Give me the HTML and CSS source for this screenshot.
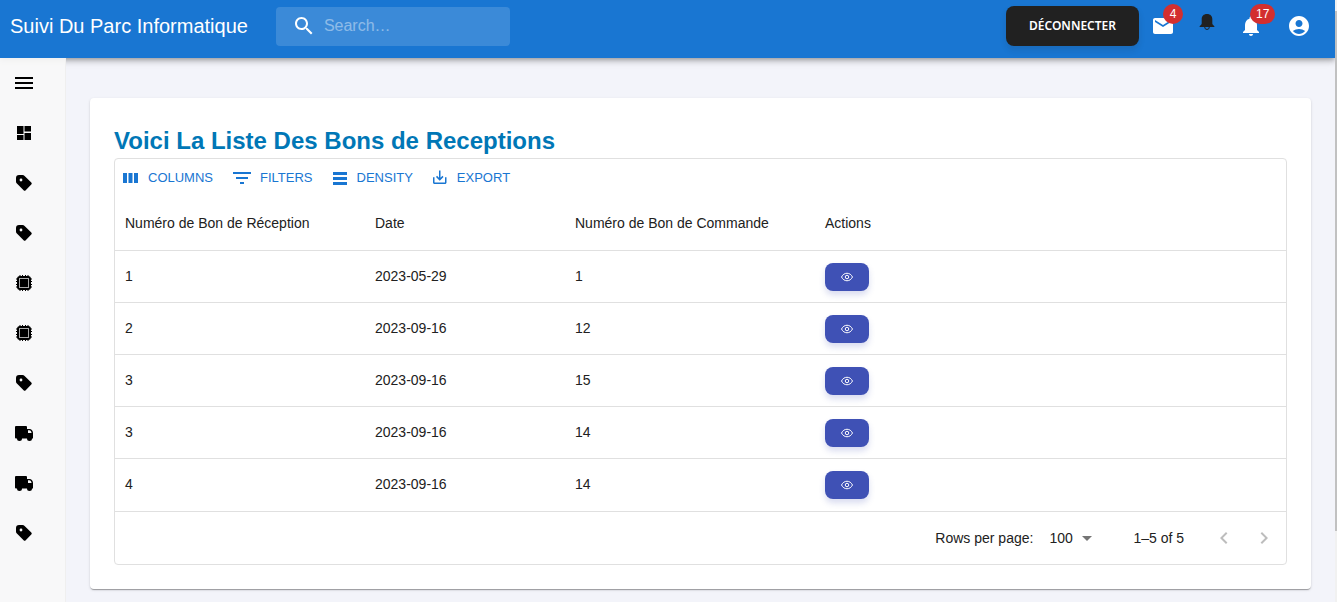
FILE: index.html
```html
<!DOCTYPE html>
<html lang="fr">
<head>
<meta charset="utf-8">
<title>Suivi Du Parc Informatique</title>
<link rel="stylesheet" href="styles.css">
</head>
<body>
<svg class="sprite" aria-hidden="true">
  <symbol id="tag" viewBox="0 0 20 20"><path fill-rule="evenodd" d="M2 5A3 3 0 0 1 5 2h3.500a3 3 0 0 1 2.100.9l6.700 6.600a1.500 1.500 0 0 1 0 2.100l-5.600 5.600a1.500 1.500 0 0 1-2.100 0L2.900 10.600A3 3 0 0 1 2 8.500zM7 5.600a1.400 1.400 0 1 0 0 2.800 1.400 1.400 0 0 0 0-2.800z"/></symbol>
  <symbol id="chip" viewBox="0 0 20 20"><path d="M5.500 2h1v16h-1zM8 2h1v16H8zM11 2h1v16h-1zM13.500 2h1v16h-1zM2 5.500h16v1H2zM2 8h16v1H2zM2 11h16v1H2zM2 13.500h16v1H2z"/><rect x="3" y="3" width="14" height="14" rx="3"/><rect class="die" x="5.500" y="5.500" width="9" height="9"/></symbol>
  <symbol id="truck" viewBox="0 0 20 20"><path fill-rule="evenodd" d="M1 4a1 1 0 0 1 1-1h10a1 1 0 0 1 1 1v2h2.500C17.500 6 19 8 19 10v5.500h-1a2.500 2.500 0 0 1-5 0H8a2.500 2.500 0 0 1-5 0H2a1 1 0 0 1-1-1zm13 3.200V10h3.600c-.2-1.500-1-2.800-2.300-2.800z"/></symbol>
  <symbol id="eye" viewBox="0 0 24 24"><path fill="none" stroke="currentColor" stroke-width="2" d="M1 12c2.500-5 6.500-7.500 11-7.500S20.500 7 23 12c-2.500 5-6.500 7.500-11 7.500S3.500 17 1 12z"/><circle cx="12" cy="12" r="3.500" fill="none" stroke="currentColor" stroke-width="2"/></symbol>
  <symbol id="bell" viewBox="0 0 24 24"><path d="M12 22c1.100 0 2-.9 2-2h-4c0 1.100.89 2 2 2zm6-6v-5c0-3.070-1.640-5.640-4.500-6.320V4c0-.83-.67-1.500-1.500-1.500s-1.500.67-1.500 1.500v.68C7.630 5.360 6 7.920 6 11v5l-2 2v1h16v-1l-2-2z"/></symbol>
</svg>
<div class="app">
  <header class="topbar">
    <span class="brand">Suivi Du Parc Informatique</span>
    <label class="search">
      <svg class="icon" viewBox="0 0 24 24" aria-hidden="true"><path d="M15.500 14h-.79l-.28-.27C15.410 12.590 16 11.110 16 9.500 16 5.910 13.090 3 9.500 3S3 5.910 3 9.500 5.910 16 9.500 16c1.610 0 3.090-.59 4.230-1.570l.27.28v.79l5 4.990L20.490 19l-4.990-5zm-6 0C7.010 14 5 11.990 5 9.500S7.010 5 9.500 5 14 7.010 14 9.500 11.990 14 9.500 14z"/></svg>
      <input type="search" placeholder="Search…" aria-label="Search">
    </label>
    <div class="account">
      <button class="logout" type="button">DÉCONNECTER</button>
      <button class="tool" type="button" aria-label="Messages"><svg class="icon" viewBox="0 0 24 24"><path d="M20 4H4c-1.100 0-1.990.9-1.990 2L2 18c0 1.100.9 2 2 2h16c1.100 0 2-.9 2-2V6c0-1.100-.9-2-2-2zm0 4l-8 5-8-5V6l8 5 8-5v2z"/></svg><span class="badge">4</span></button>
      <button class="tool dark" type="button" aria-label="Alertes"><svg viewBox="0 0 16 16"><path d="M8 0C4.500 0 2.700 2.200 2.700 5v4.500C2.700 11 .5 11.500.5 13h15c0-1.500-2.200-2-2.200-3.500V5c0-2.800-1.800-5-5.300-5z"/><path d="M5.700 13a2.300 2.500 0 0 0 4.600 0" fill="none" stroke="currentColor"/></svg></button>
      <button class="tool" type="button" aria-label="Notifications"><svg class="icon"><use href="#bell"/></svg><span class="badge">17</span></button>
      <button class="tool" type="button" aria-label="Compte"><svg class="icon" viewBox="0 0 24 24"><path d="M12 2C6.480 2 2 6.480 2 12s4.480 10 10 10 10-4.480 10-10S17.520 2 12 2zm0 4c1.930 0 3.500 1.570 3.500 3.500S13.930 13 12 13s-3.500-1.570-3.500-3.500S10.070 6 12 6zm0 14c-2.030 0-4.430-.82-6.140-2.880C7.550 15.800 9.680 15 12 15s4.450.8 6.140 2.120C16.430 19.180 14.030 20 12 20z"/></svg></button>
    </div>
  </header>
  <div class="layout">
    <nav class="sidebar" aria-label="Navigation">
      <button type="button" aria-label="Menu"><svg viewBox="0 0 20 20"><path d="M1 4h18v2H1zM1 9h18v2H1zM1 14h18v2H1z"/></svg></button>
      <a href="#" aria-label="Tableau de bord"><svg viewBox="0 0 20 20"><path d="M3 3h6.500v8H3zM10.500 3H17v5.500h-6.500zM3 12h6.500v5H3zM10.500 10H17v7h-6.500z"/></svg></a>
      <a href="#" aria-label="Marques"><svg><use href="#tag"/></svg></a>
      <a href="#" aria-label="Catégories"><svg><use href="#tag"/></svg></a>
      <a href="#" aria-label="Matériels"><svg><use href="#chip"/></svg></a>
      <a href="#" aria-label="Composants"><svg><use href="#chip"/></svg></a>
      <a href="#" aria-label="Commandes"><svg><use href="#tag"/></svg></a>
      <a href="#" aria-label="Fournisseurs"><svg><use href="#truck"/></svg></a>
      <a href="#" aria-label="Livraisons"><svg><use href="#truck"/></svg></a>
      <a href="#" aria-label="Réceptions"><svg><use href="#tag"/></svg></a>
    </nav>
    <main class="content">
      <section class="card">
        <h1>Voici La Liste Des Bons de Receptions</h1>
        <div class="grid">
          <div class="toolbar">
            <button type="button"><svg width="16" height="18" viewBox="0 0 16 18"><path d="M0 4h4v10H0zM5.500 4h4v10h-4zM11 4h4v10h-4z"/></svg>COLUMNS</button>
            <button type="button"><svg width="18" height="18" viewBox="0 0 18 18"><path d="M0 3h18v2H0zM3 8h12v2H3zM7 13h4v2H7z"/></svg>FILTERS</button>
            <button type="button"><svg width="15" height="18" viewBox="0 0 15 18"><path d="M0 3h14v3H0zM0 8h14v3H0zM0 13h14v3H0z"/></svg>DENSITY</button>
            <button type="button"><svg width="15" height="18" viewBox="3 1 20 24"><path d="M19 12v7H5v-7H3v7c0 1.100.9 2 2 2h14c1.100 0 2-.9 2-2v-7h-2zm-6 .67l2.590-2.580L17 11.500l-5 5-5-5 1.410-1.410L11 12.670V3h2z"/></svg>EXPORT</button>
          </div>
          <table>
            <colgroup><col class="c-wide"><col class="c-date"><col class="c-wide"><col></colgroup>
            <thead><tr><th>Numéro de Bon de Réception</th><th>Date</th><th>Numéro de Bon de Commande</th><th>Actions</th></tr></thead>
            <tbody>
              <tr><td>1</td><td>2023-05-29</td><td>1</td><td class="actions"><button class="view" type="button" aria-label="Voir"><svg><use href="#eye"/></svg></button></td></tr>
              <tr><td>2</td><td>2023-09-16</td><td>12</td><td class="actions"><button class="view" type="button" aria-label="Voir"><svg><use href="#eye"/></svg></button></td></tr>
              <tr><td>3</td><td>2023-09-16</td><td>15</td><td class="actions"><button class="view" type="button" aria-label="Voir"><svg><use href="#eye"/></svg></button></td></tr>
              <tr><td>3</td><td>2023-09-16</td><td>14</td><td class="actions"><button class="view" type="button" aria-label="Voir"><svg><use href="#eye"/></svg></button></td></tr>
              <tr><td>4</td><td>2023-09-16</td><td>14</td><td class="actions"><button class="view" type="button" aria-label="Voir"><svg><use href="#eye"/></svg></button></td></tr>
            </tbody>
          </table>
          <footer class="pager">
            <label for="rows">Rows per page:</label>
            <span class="select"><select id="rows"><option>100</option></select><svg class="icon" viewBox="0 0 24 24" aria-hidden="true"><path d="M7 10l5 5 5-5z"/></svg></span>
            <span class="range">1–5 of 5</span>
            <button type="button" aria-label="Page précédente" disabled><svg class="icon" viewBox="0 0 24 24"><path d="M15.410 7.410L14 6l-6 6 6 6 1.410-1.410L10.830 12z"/></svg></button>
            <button type="button" aria-label="Page suivante" disabled><svg class="icon" viewBox="0 0 24 24"><path d="M10 6L8.590 7.410 13.170 12l-4.580 4.590L10 18l6-6z"/></svg></button>
          </footer>
        </div>
      </section>
    </main>
  </div>
</div>
<div class="scroll" aria-hidden="true"><div class="thumb"></div></div>
</body>
</html>
```
FILE: styles.css
```css
* { box-sizing: border-box; }
body {
  margin: 0;
  min-height: 100vh;
  display: grid;
  grid-template-columns: 1fr 2px;
  background: #f3f4fa;
  color: #212121;
  font: 14px/20px "Liberation Sans", Arial, sans-serif;
}
button, input, select { font: inherit; color: inherit; border: 0; background: none; padding: 0; margin: 0; }
svg { display: block; fill: currentColor; }
.sprite { position: absolute; width: 0; height: 0; }
.icon { width: 24px; height: 24px; }

.app { display: flex; flex-direction: column; min-width: 0; }
.topbar {
  display: flex;
  align-items: center;
  height: 58px;
  padding: 0 24px 6px 10px;
  background: #1976d2;
  color: #fff;
  box-shadow: 0 2px 4px -1px rgba(0,0,0,.2), 0 4px 5px rgba(0,0,0,.14), 0 1px 10px rgba(0,0,0,.12);
}
.brand { font-size: 20px; line-height: 32px; white-space: nowrap; }
.search {
  display: flex;
  align-items: center;
  gap: 8px;
  width: 234px;
  height: 39px;
  margin-left: 28px;
  padding: 0 16px;
  border-radius: 4px;
  background: rgba(255,255,255,.15);
}
.search .icon { flex: none; }
.search input { flex: 1; min-width: 0; font-size: 16px; line-height: 24px; outline: 0; }
.search input::placeholder { color: #fff; opacity: .42; }
.account { display: flex; align-items: center; margin-left: auto; }
.logout {
  height: 40px;
  padding: 0 23px;
  margin-right: 12px;
  border-radius: 8px;
  background: #212121;
  box-shadow: 0 4px 6px rgba(33,33,33,.12);
  font: 600 12px/20px "Noto Sans", sans-serif;
}
.tool { position: relative; margin-right: 20px; }
.tool:last-child { margin: 0 0 0 4px; }
.dark { color: #212121; margin: 0 24px 8px 4px; }
.dark svg { width: 16px; height: 16px; }
.badge {
  position: absolute;
  left: 12px;
  top: -10px;
  min-width: 20px;
  height: 20px;
  padding: 0 6px;
  border-radius: 10px;
  background: #d32f2f;
  color: #fff;
  font-size: 12px;
}
.tool:nth-last-child(2) .badge { left: 11px; }

.layout { display: flex; flex: 1; }
.sidebar {
  position: relative;
  flex: none;
  width: 66px;
  border-right: 1px solid #efefef;
  background: rgba(248,248,248,.9);
}
.sidebar > * { display: flex; align-items: center; width: 100%; height: 50px; padding-left: 14px; color: #000; }
.sidebar svg { width: 20px; height: 20px; }
.die { stroke: #aaa; }
.content { flex: 1; min-width: 0; padding: 40px 24px 13px; }
.card {
  padding: 25px 24px 24px;
  border-radius: 4px;
  background: #fff;
  box-shadow: 0 2px 1px -1px rgba(0,0,0,.2), 0 1px 1px rgba(0,0,0,.14), 0 1px 3px rgba(0,0,0,.12);
}
h1 { margin: 0; font-size: 24px; line-height: 35px; color: #0077b6; }
.grid { border: 1px solid #e0e0e0; border-radius: 4px; }
.toolbar { display: flex; gap: 20px; padding: 4px 8px 2px; color: #1976d2; font-size: 13px; }
.toolbar button { display: flex; align-items: center; gap: 9px; height: 30px; }
table { width: 100%; table-layout: fixed; border-collapse: separate; border-spacing: 0; }
.c-wide { width: 250px; }
.c-date { width: 200px; }
th, td { padding: 0 10px; text-align: left; font-weight: 400; border-bottom: 1px solid #e0e0e0; }
th { height: 56px; }
td { height: 52px; padding-bottom: 2px; }
td.actions { padding-bottom: 0; }
tbody tr:last-child td { border-bottom: 0; }
.view {
  display: flex;
  align-items: center;
  justify-content: center;
  width: 44px;
  height: 28px;
  border-radius: 8px;
  background: #3f51b5;
  color: #fff;
  box-shadow: 0 4px 6px rgba(63,81,181,.2);
}
.view svg { width: 12px; height: 12px; }
.pager {
  display: flex;
  align-items: center;
  justify-content: flex-end;
  height: 53px;
  padding-right: 2px;
  border-top: 1px solid #e0e0e0;
}
.select { position: relative; display: flex; align-items: center; margin: 0 34px 0 16px; }
.select select { appearance: none; width: 50px; }
.select .icon { position: absolute; right: 0; pointer-events: none; color: #757575; }
.range { margin-right: 20px; }
.pager button { padding: 8px; color: #bdbdbd; }

.scroll { padding-top: 11px; background: #f1f1f1; }
.thumb { height: 88%; background: #c1c1c1; }
```
